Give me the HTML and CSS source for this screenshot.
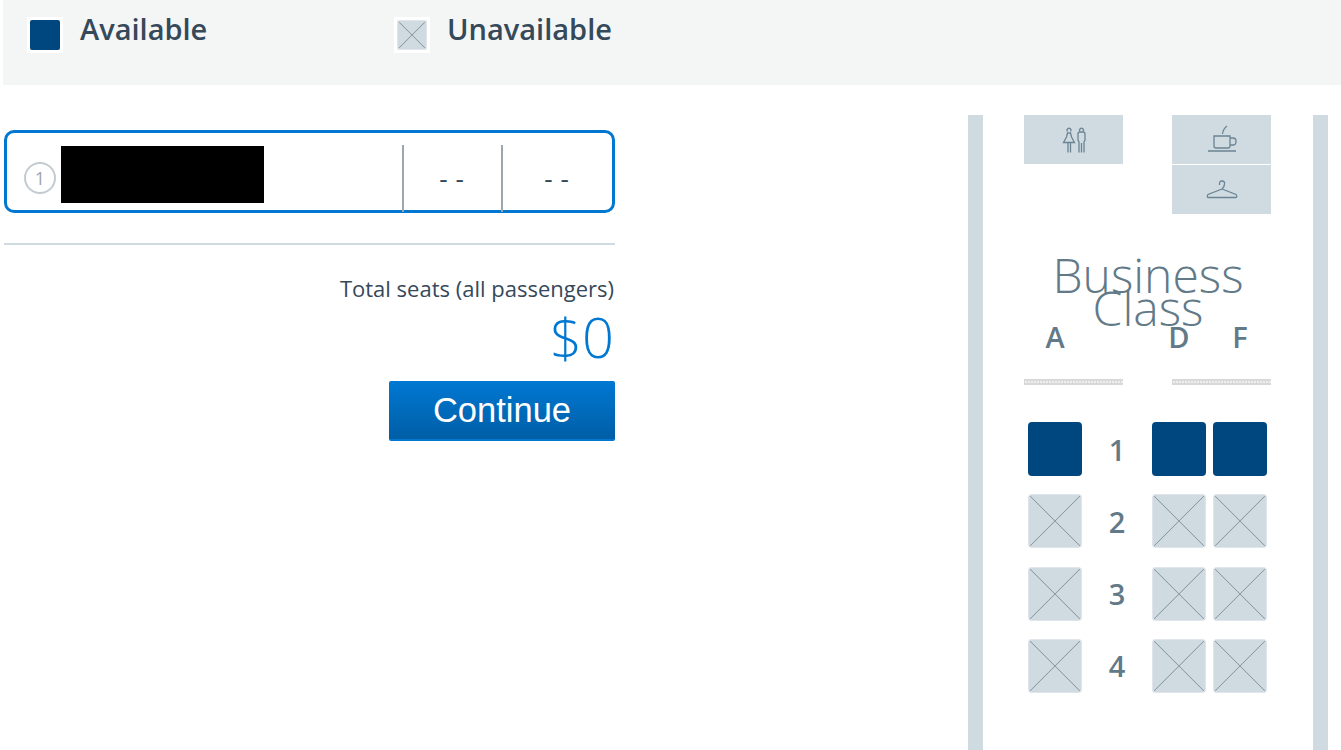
FILE: index.html
```html
<!DOCTYPE html>
<html>
<head>
<title>Seat map</title>
<link rel="stylesheet" href="styles.css">
</head>
<body>

<div class="legend">
  <div class="legendItem legendFirst">
    <span class="legendBox"><span class="legendSeat available"></span></span>
    <span class="legendText">Available</span>
  </div>
  <div class="legendItem">
    <span class="legendBox"><span class="legendSeat unavailable"></span></span>
    <span class="legendText">Unavailable</span>
  </div>
</div>

<div class="main">
  <div class="summary">
    <div class="passenger">
      <div class="passengerName">
        <span class="passengerNumber">1</span>
        <span class="redacted"></span>
      </div>
      <div class="passengerSeat">--</div>
      <div class="passengerPrice">--</div>
    </div>
    <div class="divider"></div>
    <p class="totalLabel">Total seats (all passengers)</p>
    <p class="totalPrice">$0</p>
    <button class="continue" type="button">Continue</button>
  </div>

  <div class="cabin">
    <div class="amenities">
      <div class="amenityGroup">
        <div class="amenity">
          <svg width="26" height="30" viewBox="0 0 26 30" class="amenityIcon">
            <path d="M6.500 6.500a2 2 0 1 1 3 0"/>
            <path d="M6.500 8h3l1 4 3 5.500h-11l3-5.500zM7 17.500v10M9.500 17.500v10"/>
            <path d="M19 6.500a2 2 0 1 1 3 0"/>
            <path d="M18 27.500V17l-1-2V9q0-2 2-2h3q2 0 2 2v6l-1 2v10.500M20.500 18v9.500"/>
          </svg>
        </div>
      </div>
      <div class="amenityGroup">
        <div class="amenity">
          <svg width="30" height="30" viewBox="0 0 30 30" class="amenityIcon">
            <path d="M20 1q-4 3-4.500 8M7 11h16v10q0 2-2 2H9q-2 0-2-2zM23 13h3q3 0 3 3.500T26 20h-3M1 26h28"/>
          </svg>
        </div>
        <div class="amenity">
          <svg width="32" height="22" viewBox="0 0 32 22" class="amenityIcon">
            <path d="M13.500 6q-.5-4 2.500-4t2.500 3q0 3-2.500 5L2 15.500q-2 3 1 3h26q3 0 1-3L16 10"/>
          </svg>
        </div>
      </div>
    </div>

    <h2 class="cabinTitle">Business Class</h2>

    <div class="seatRow letters">
      <span>A</span><span></span><span>D</span><span></span><span>F</span>
    </div>

    <div class="galley">
      <div class="galleyStrip"></div>
      <div class="galleyStrip"></div>
    </div>

    <div class="seatRow">
      <span class="seat available"></span><span class="rowNumber">1</span><span class="seat available"></span><span></span><span class="seat available"></span>
    </div>
    <div class="seatRow">
      <span class="seat unavailable"></span><span class="rowNumber">2</span><span class="seat unavailable"></span><span></span><span class="seat unavailable"></span>
    </div>
    <div class="seatRow">
      <span class="seat unavailable"></span><span class="rowNumber">3</span><span class="seat unavailable"></span><span></span><span class="seat unavailable"></span>
    </div>
    <div class="seatRow">
      <span class="seat unavailable"></span><span class="rowNumber">4</span><span class="seat unavailable"></span><span></span><span class="seat unavailable"></span>
    </div>
  </div>
</div>

</body>
</html>
```

FILE: styles.css
```css
html, body {
  height: 750px;
  overflow: hidden;
}

body {
  margin: 0;
  padding-left: 3px;
  background-color: #FFFFFF;
  color: #36495A;
  font-family: "Open Sans", sans-serif;
}

p {
  margin: 0;
}

/* legend */
.legend {
  display: flex;
  height: 85px;
  padding-left: 24px;
  background-color: #F4F6F6;
}

.legendItem {
  display: flex;
  align-items: flex-start;
  padding-top: 17px;
}

.legendFirst {
  width: 367px;
}

.legendBox {
  display: block;
  width: 30px;
  height: 30px;
  padding: 3px;
  background-color: #FFFFFF;
}

.legendSeat {
  display: block;
  width: 30px;
  height: 30px;
  border-radius: 2px;
}

.legendText {
  margin-left: 17px;
  margin-top: -8px;
  font-size: 29px;
  font-weight: 600;
}

/* seat colours, shared by the legend and the map */
.available {
  background-color: #00467F;
}

.unavailable {
  background-color: #D0DAE1;
  background-image:
    linear-gradient(45deg, transparent calc(50% - 0.8px), #8E9DA6 50%, transparent calc(50% + 0.8px)),
    linear-gradient(-45deg, transparent calc(50% - 0.8px), #8E9DA6 50%, transparent calc(50% + 0.8px));
  background-position: center;
  background-repeat: no-repeat;
  background-size: calc(100% - 4px) calc(100% - 4px);
  box-shadow: inset 0 0 0 1px #DFE5EA;
}

.main {
  display: flex;
  justify-content: space-between;
}

/* left column */
.summary {
  display: flex;
  flex-direction: column;
  align-items: flex-end;
  width: 611px;
  margin-left: 1px;
  padding-top: 45px;
}

.passenger {
  display: flex;
  box-sizing: border-box;
  width: 100%;
  height: 83px;
  padding-top: 12px;
  border: 3px solid #0078D2;
  border-radius: 10px;
}

.passengerName {
  display: flex;
  align-items: center;
  width: 395px;
  padding-left: 17px;
  box-sizing: border-box;
}

.passengerNumber {
  display: flex;
  align-items: center;
  justify-content: center;
  box-sizing: border-box;
  width: 32px;
  height: 32px;
  border: 2px solid #C3CBD0;
  border-radius: 50%;
  color: #9DA6AB;
  font-size: 18px;
}

.redacted {
  align-self: flex-start;
  width: 203px;
  height: 57px;
  margin-left: 5px;
  margin-top: 1px;
  background-color: #000000;
}

/* the dividers run down into the card's border */
.passengerSeat,
.passengerPrice {
  display: flex;
  align-items: center;
  justify-content: center;
  margin-bottom: -2px;
  padding-bottom: 2px;
  padding-left: 6px;
  border-left: 2px solid #9DA6AB;
  font-size: 26px;
  letter-spacing: 8px;
}

.passengerSeat {
  width: 91px;
}

.passengerPrice {
  flex: 1;
}

.divider {
  width: 100%;
  height: 2px;
  margin-top: 30px;
  background-color: #D0DAE1;
}

.totalLabel {
  margin-top: 29px;
  margin-right: 1px;
  font-size: 22px;
  line-height: 28px;
}

.totalPrice {
  margin-top: 3px;
  margin-right: 1px;
  color: #0078D2;
  font-size: 56px;
  font-weight: 300;
  line-height: 62px;
}

.continue {
  width: 226px;
  height: 60px;
  margin-top: 14px;
  padding: 0;
  border: 0;
  border-bottom: 2px solid #0078D2;
  border-radius: 2px;
  background: linear-gradient(#0078D2, #005EA6);
  color: #FFFFFF;
  font-family: "Liberation Sans", sans-serif;
  font-size: 34.5px;
}

/* seat map */
.cabin {
  width: 330px;
  height: 635px;
  margin-top: 30px;
  margin-right: 13px;
  border-left: 15px solid #D0DAE1;
  border-right: 15px solid #D0DAE1;
}

.amenities {
  display: flex;
  gap: 49px;
  padding-left: 41px;
}

.amenityGroup {
  display: flex;
  flex-direction: column;
  gap: 1px;
  width: 99px;
}

.amenity {
  display: flex;
  align-items: center;
  justify-content: center;
  height: 49px;
  background-color: #D0DAE1;
}

.amenityIcon {
  fill: none;
  stroke: #6A8493;
  stroke-width: 1.3;
}

.cabinTitle {
  width: 220px;
  margin: 44px 0 0 55px;
  color: #627A88;
  font-size: 48px;
  font-weight: 300;
  line-height: 33px;
  text-align: center;
}

.seatRow {
  display: grid;
  grid-template-columns: 54px 70px 54px 7px 54px;
  align-items: center;
  height: 54px;
  margin-bottom: 18.3px;
  padding-left: 45px;
  color: #627A88;
  font-size: 29px;
  font-weight: 600;
  text-align: center;
}

.letters {
  height: 38px;
  margin-top: -7px;
  margin-bottom: 0;
}

.galley {
  display: flex;
  gap: 49px;
  margin-top: 24px;
  margin-bottom: 37px;
  padding-left: 41px;
}

.galleyStrip {
  width: 99px;
  height: 6px;
  background-color: #D8D8D8;
  background-image: repeating-linear-gradient(90deg, #D8D8D8 0 1px, #EFEFEF 1px 3px);
  background-size: 100% 2px;
  background-position: 0 2px;
  background-repeat: no-repeat;
}

.seat {
  display: block;
  height: 54px;
  border-radius: 4px;
}
```
